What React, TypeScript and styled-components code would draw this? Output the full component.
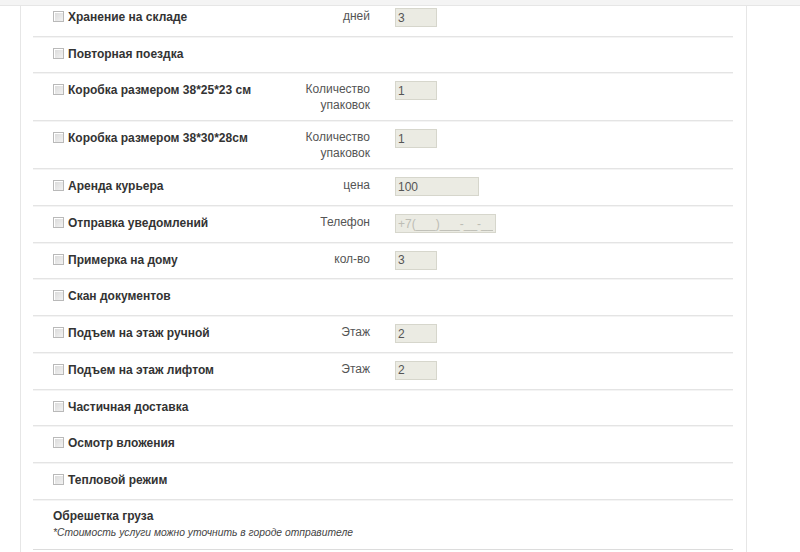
import React from "react";
import styled, { createGlobalStyle } from "styled-components";

const Global = createGlobalStyle`
  html, body { margin: 0; padding: 0; background: #fff; }
  body { font-family: "Liberation Sans", Arial, sans-serif; font-size: 12px; color: #333; }
`;

const TopBand = styled.div`
  height: 5px;
  background: #f4f4f4;
  border-bottom: 1px solid #e6e6e6;
`;

const Page = styled.div`
  display: grid;
  grid-template-columns: 20px 727px 1fr;
  min-height: 546px;
`;

const Panel = styled.div`
  grid-column: 2;
  border-left: 1px solid #e6e6e6;
  border-right: 1px solid #e6e6e6;
  padding-left: 12px;
`;

const List = styled.div`
  width: 700px;
  display: flex;
  flex-direction: column;
`;

const Row = styled.div<{ $first?: boolean }>`
  display: grid;
  grid-template-columns: 202px 90px 1fr;
  column-gap: 25px;
  align-items: start;
  padding: ${(p) => (p.$first ? "2px" : "8px")} 0 7px 20px;
  min-height: 20.7px;
  border-bottom: 1px solid #e4e4e4;
  box-shadow: 0 1px 0 #f4f4f4;
`;

const LabelCell = styled.label`
  display: flex;
  align-items: flex-start;
  gap: 4px;
  font-weight: bold;
  font-size: 12px;
  line-height: 16px;
  color: #333;
  padding-top: 1px;
  white-space: nowrap;
`;

const Check = styled.input.attrs({ type: "checkbox" })`
  appearance: none;
  margin: 2px 0 0 0;
  width: 11px;
  height: 11px;
  flex: none;
  border: 1px solid #b9b9b9;
  background: linear-gradient(135deg, #d9d9d9 0%, #f2f2f2 100%);
  box-shadow: inset 1px 1px 0 #fff;
`;

const FieldLabel = styled.div`
  text-align: right;
  font-size: 12px;
  line-height: 16px;
  color: #555;
`;

const Field = styled.input<{ $w: number }>`
  box-sizing: border-box;
  width: ${(p) => p.$w}px;
  height: 19px;
  margin: 0;
  padding: 0 2px;
  border: 1px solid #d6d6cc;
  background: #ebebe3;
  font-family: "Liberation Sans", Arial, sans-serif;
  font-size: 12px;
  color: #555;
  outline: none;
  &::placeholder { color: #bdbdb5; }
`;

const Footer = styled.div`
  padding: 8px 0 7px 20px;
  border-bottom: 1px solid #dcdcdc;
`;

const FooterTitle = styled.div`
  font-weight: bold;
  font-size: 12px;
  line-height: 16px;
  color: #333;
`;

const Note = styled.div`
  font-style: italic;
  font-size: 10.3px;
  line-height: 18px;
  color: #444;
`;

type Item = {
  label: string;
  field?: string;
  value?: string;
  placeholder?: string;
  w?: number;
};

const items: Item[] = [
  { label: "Хранение на складе", field: "дней", value: "3", w: 42 },
  { label: "Повторная поездка" },
  { label: "Коробка размером 38*25*23 см", field: "Количество упаковок", value: "1", w: 42 },
  { label: "Коробка размером 38*30*28см", field: "Количество упаковок", value: "1", w: 42 },
  { label: "Аренда курьера", field: "цена", value: "100", w: 84 },
  { label: "Отправка уведомлений", field: "Телефон", placeholder: "+7(___)___-__-__", w: 101 },
  { label: "Примерка на дому", field: "кол-во", value: "3", w: 42 },
  { label: "Скан документов" },
  { label: "Подъем на этаж ручной", field: "Этаж", value: "2", w: 42 },
  { label: "Подъем на этаж лифтом", field: "Этаж", value: "2", w: 42 },
  { label: "Частичная доставка" },
  { label: "Осмотр вложения" },
  { label: "Тепловой режим" },
];

export default function App() {
  return (
    <>
      <Global />
      <TopBand />
      <Page>
        <Panel>
          <List>
            {items.map((it, i) => (
              <Row key={i} $first={i === 0}>
                <LabelCell>
                  <Check />
                  <span>{it.label}</span>
                </LabelCell>
                {it.field ? <FieldLabel>{it.field}</FieldLabel> : <div />}
                {it.field ? (
                  <Field
                    $w={it.w || 42}
                    defaultValue={it.value}
                    placeholder={it.placeholder}
                  />
                ) : (
                  <div />
                )}
              </Row>
            ))}
            <Footer>
              <FooterTitle>Обрешетка груза</FooterTitle>
              <Note>*Стоимость услуги можно уточнить в городе отправителе</Note>
            </Footer>
          </List>
        </Panel>
      </Page>
    </>
  );
}
